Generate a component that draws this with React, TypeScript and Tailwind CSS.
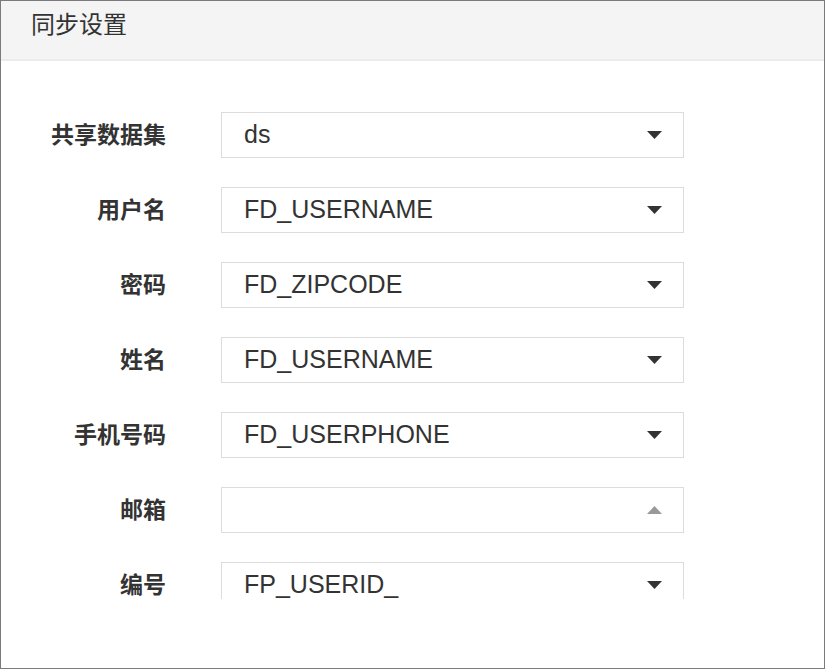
const rows: { label: string; value: string; open?: boolean }[] = [
  { label: '共享数据集', value: 'ds' },
  { label: '用户名', value: 'FD_USERNAME' },
  { label: '密码', value: 'FD_ZIPCODE' },
  { label: '姓名', value: 'FD_USERNAME' },
  { label: '手机号码', value: 'FD_USERPHONE' },
  { label: '邮箱', value: '', open: true },
  { label: '编号', value: 'FP_USERID_' },
]

const font = { fontFamily: '"Liberation Sans", "Noto Sans CJK SC", sans-serif' }

export default function App() {
  return (
    <div
      className="w-[825px] h-[669px] border border-[#7b7b7b] bg-white flex flex-col"
      style={font}
    >
      {/* header */}
      <div className="h-[60px] shrink-0 bg-[#f4f4f4] border-b-2 border-[#ebebeb] pl-[30px] pt-[8px]">
        <span className="text-[24px] leading-[32px] text-[#333]">同步设置</span>
      </div>

      {/* scroll area */}
      <div className="h-[538px] overflow-hidden pt-[51px]">
        <div className="flex flex-col gap-[29px]">
          {rows.map((r) => (
            <div key={r.label} className="flex items-center">
              <div className="w-[165px] text-right text-[23px] font-bold text-[#333]">{r.label}</div>
              <div className="ml-[55px] w-[463px] h-[46px] border border-[#dcdcdc] flex items-center pl-[22px] pr-[21px]">
                <span className="flex-1 text-[25px] text-[#333]">{r.value}</span>
                {r.open ? (
                  <svg width="15" height="8" viewBox="0 0 15 8">
                    <polygon points="0,8 15,8 7.5,0" fill="#999" />
                  </svg>
                ) : (
                  <svg width="15" height="8" viewBox="0 0 15 8">
                    <polygon points="0,0 15,0 7.5,8" fill="#333" />
                  </svg>
                )}
              </div>
            </div>
          ))}
        </div>
      </div>
    </div>
  )
}
